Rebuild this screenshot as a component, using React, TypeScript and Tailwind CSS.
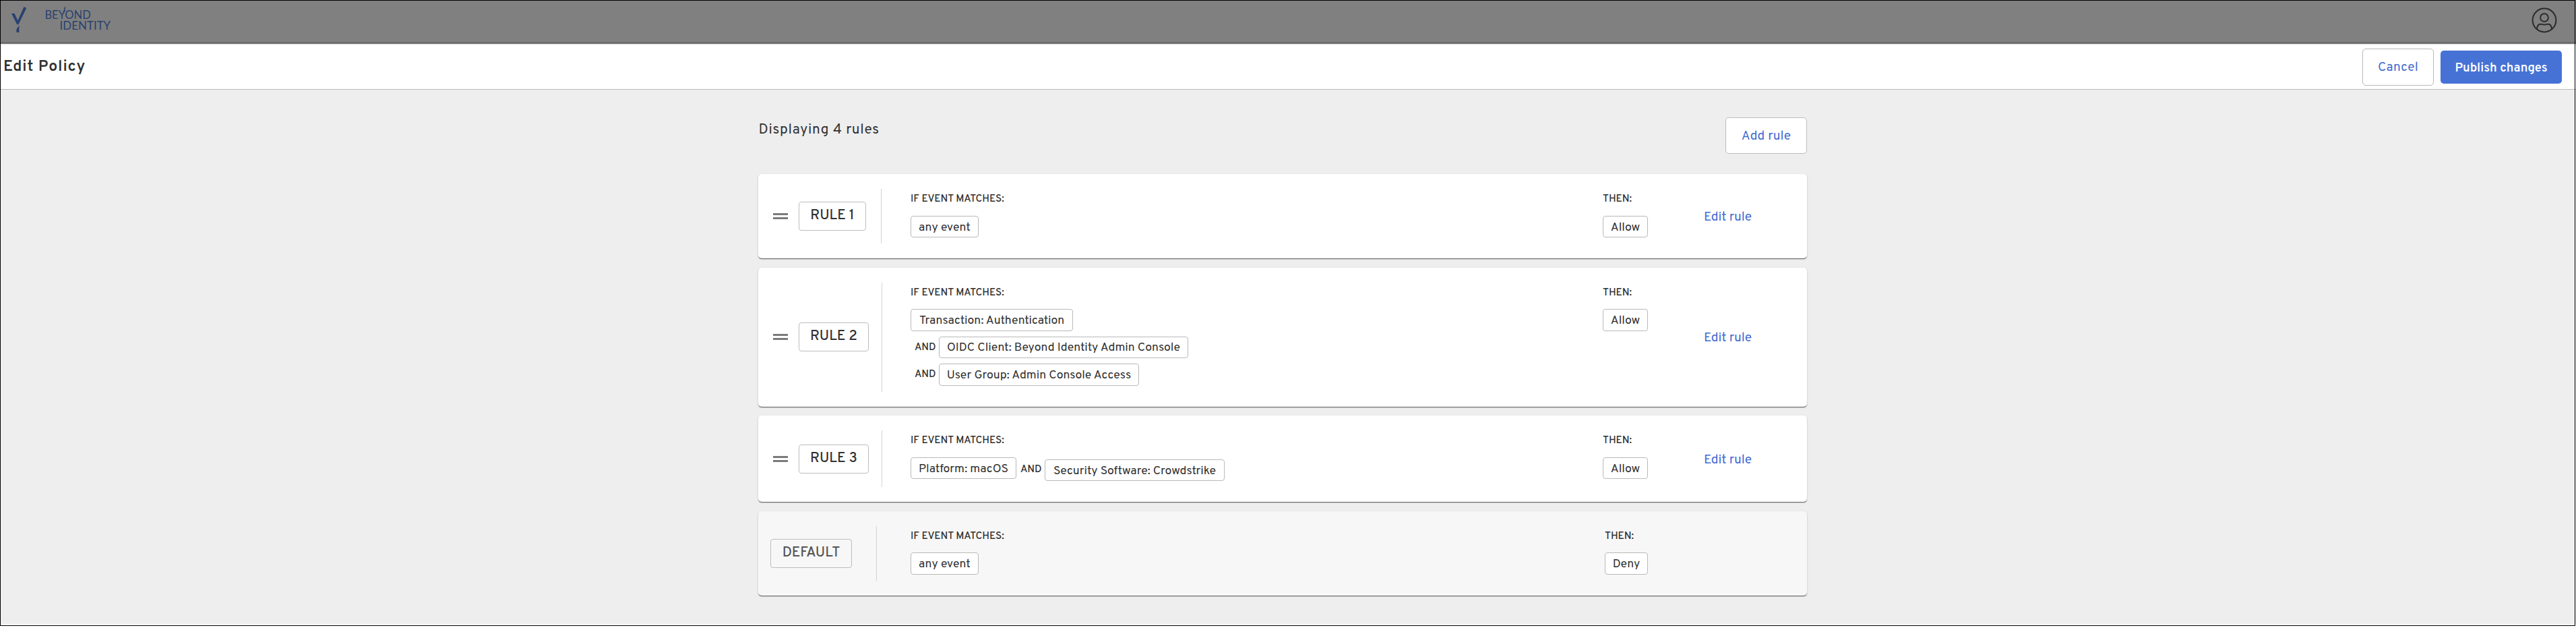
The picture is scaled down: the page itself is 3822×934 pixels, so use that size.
import React from "react";

type Condition = { text: string; className: string; joined?: boolean };
type Rule = {
  name: string;
  card: string;
  boxWidth: string;
  conditions: Condition[];
  inline?: boolean;
  action: string;
  actionHeight: string;
  chipsTop: string;
  isDefault?: boolean;
};

const rules: Rule[] = [
  {
    name: "RULE 1",
    card: "h-[125px]",
    boxWidth: "w-[100px]",
    conditions: [{ text: "any event", className: "h-8 w-[101px]" }],
    action: "Allow",
    actionHeight: "h-8 w-[67px]",
    chipsTop: "mt-[14px]",
  },
  {
    name: "RULE 2",
    card: "h-[206px]",
    boxWidth: "w-[104px]",
    conditions: [
      { text: "Transaction: Authentication", className: "h-[33px] w-[241px]" },
      { text: "OIDC Client: Beyond Identity Admin Console", className: "h-8 w-[370px]", joined: true },
      { text: "User Group: Admin Console Access", className: "h-[33px] w-[297px]", joined: true },
    ],
    action: "Allow",
    actionHeight: "h-[33px] w-[67px]",
    chipsTop: "mt-[13px]",
  },
  {
    name: "RULE 3",
    card: "h-[128px]",
    boxWidth: "w-[104px]",
    conditions: [
      { text: "Platform: macOS", className: "h-8 w-[157px]" },
      { text: "Security Software: Crowdstrike", className: "mt-[3px] h-8 w-[267px]", joined: true },
    ],
    inline: true,
    action: "Allow",
    actionHeight: "h-8 w-[67px]",
    chipsTop: "mt-[14px]",
  },
  {
    name: "DEFAULT",
    card: "h-[125px]",
    boxWidth: "w-[121px]",
    conditions: [{ text: "any event", className: "h-[33px] w-[101px]" }],
    action: "Deny",
    actionHeight: "h-[33px] w-16",
    chipsTop: "mt-[13px]",
    isDefault: true,
  },
];

function Chip({ children, className }: { children: React.ReactNode; className: string }) {
  return (
    <span
      className={`flex shrink-0 items-center justify-center whitespace-nowrap rounded-[4px] border border-[#b9b9b9] bg-white pt-[3px] text-[17.6px] leading-[22px] ${className}`}
    >
      {children}
    </span>
  );
}

function Label({ children }: { children: React.ReactNode }) {
  return <div className="whitespace-nowrap text-[15.2px] font-medium leading-5">{children}</div>;
}

function Grip() {
  return (
    <div className="ml-[22px] mr-4 flex w-[22px] shrink-0 flex-col gap-[3px]">
      <div className="h-[3px] bg-[#7b7b7b]" />
      <div className="h-[3px] bg-[#7b7b7b]" />
    </div>
  );
}

function RuleCard({ rule }: { rule: Rule }) {
  return (
    <section
      className={`flex rounded-[5px] shadow-[0_2px_1px_-1px_rgba(0,0,0,0.36),0_1px_1px_0_rgba(0,0,0,0.3),0_1px_3px_0_rgba(0,0,0,0.14)] ${rule.card} ${rule.isDefault ? "bg-[#f7f7f7]" : "bg-white"}`}
    >
      <div className="flex w-[226px] shrink-0 items-center">
        {rule.isDefault ? <div className="w-[18px] shrink-0" /> : <Grip />}
        <div
          className={`flex h-[43px] shrink-0 items-center justify-center rounded-[4px] border border-[#bdbdbd] text-[20.7px] font-medium ${rule.boxWidth} ${rule.isDefault ? "text-[#555]" : ""}`}
        >
          {rule.name}
        </div>
        <div
          className={`my-[22px] ml-auto w-px self-stretch bg-[#d4d4d4] ${rule.isDefault ? "mr-[50px]" : rule.name === "RULE 1" ? "mr-[43px]" : "mr-[42px]"}`}
        />
      </div>
      <div className="grow pt-7">
        <Label>IF EVENT MATCHES:</Label>
        <div className={`flex ${rule.inline ? "items-start" : "flex-col gap-2"} ${rule.chipsTop}`}>
          {rule.conditions.map((c) => (
            <div key={c.text} className="flex items-start">
              {c.joined && (
                <span
                  className={`ml-[6px] w-9 shrink-0 text-[15.2px] font-medium leading-5 ${rule.inline ? "mt-[9px]" : "mt-[7px]"}`}
                >
                  AND
                </span>
              )}
              <Chip className={c.className}>{c.text}</Chip>
            </div>
          ))}
        </div>
      </div>
      <div className="shrink-0 pt-7">
        <Label>THEN:</Label>
        <div className={rule.chipsTop}>
          <Chip className={rule.actionHeight}>{rule.action}</Chip>
        </div>
      </div>
      <div className="flex w-[236px] shrink-0 items-center pl-[83px] pt-[3px]">
        {!rule.isDefault && (
          <button className="whitespace-nowrap text-[19px] leading-6 text-[#3f6ad2]">Edit rule</button>
        )}
      </div>
    </section>
  );
}

function Logo() {
  return (
    <svg width="180" height="60" viewBox="0 0 180 60" className="shrink-0" fill="#29416f">
      <path d="M17 20H21.6L26.4 30.4L35.6 10L39.2 12L27.4 36.2H25.2Z" />
      <path d="M28.4 37.5V48H24.4V43.4Z" />
      <text x="66.4" y="28" fontSize="16.4" fontFamily="Lato, sans-serif" textLength="68.4" lengthAdjust="spacingAndGlyphs">
        BEYOND
      </text>
      <path d="M94.2 19L96.8 10.4" stroke="#29416f" strokeWidth="1.5" />
      <text x="88.6" y="44" fontSize="16.8" fontFamily="Lato, sans-serif" textLength="75.6" lengthAdjust="spacingAndGlyphs">
        IDENTITY
      </text>
    </svg>
  );
}

function UserIcon() {
  return (
    <svg width="38" height="38" viewBox="0 0 38 38" fill="none" stroke="#2b2b2b" strokeWidth="2">
      <circle cx="19" cy="19" r="17.4" />
      <circle cx="19" cy="15.2" r="5.9" />
      <path d="M8.2 32.4C8.2 27.5 10.2 24.7 13.4 24.7C15.6 24.7 16.6 25.6 19 25.6C21.4 25.6 22.4 24.7 24.6 24.7C27.8 24.7 29.8 27.5 29.8 32.4" />
    </svg>
  );
}

export default function App() {
  return (
    <div className="relative h-[934px] w-[3822px] overflow-hidden bg-white font-[Overpass,Roboto,sans-serif] text-[#303030]">
      <header className="flex h-[65px] items-start justify-between border-b-[3px] border-[#6e6e6e] bg-[#808080]">
        <Logo />
        <div className="mr-[28.5px] mt-[11px]">
          <UserIcon />
        </div>
      </header>
      <div className="flex h-[68px] items-center border-b border-t border-b-[#b9b9b9] border-t-[#dcdcdc] bg-white pl-[5px] pr-[21px]">
        <h1 className="grow pt-[2px] text-[23px] font-semibold leading-7 tracking-[0.9px]">Edit Policy</h1>
        <button className="h-[55px] w-[106px] rounded-[5px] border border-[#b9b9b9] bg-white pt-[2px] text-[19px] tracking-[0.25px] text-[#3f6ad2]">
          Cancel
        </button>
        <button className="ml-[10px] h-[49px] w-[180px] rounded-[5px] bg-[#4672d6] pt-[5px] text-[18.3px] font-semibold text-white">
          Publish changes
        </button>
      </div>
      <main className="flex h-[792px] flex-col bg-[#eeeeee] pl-[1125px] pt-[41px]">
        <div className="flex h-[84px] w-[1556px] items-start justify-between">
          <h2 className="ml-[0.5px] mt-[5px] text-[20.9px] leading-7 tracking-[0.7px]">Displaying 4 rules</h2>
          <button className="h-[54px] w-[121px] rounded-[5px] border border-[#bdbdbd] bg-white pt-[2px] text-[19px] tracking-[0.25px] text-[#3f6ad2]">
            Add rule
          </button>
        </div>
        <div className="flex w-[1556px] flex-col gap-[13.6px]">
          {rules.map((rule) => (
            <RuleCard key={rule.name} rule={rule} />
          ))}
        </div>
      </main>
      <div className="pointer-events-none absolute left-0 top-0 h-[928px] w-[3821px] border border-black" />
    </div>
  );
}
